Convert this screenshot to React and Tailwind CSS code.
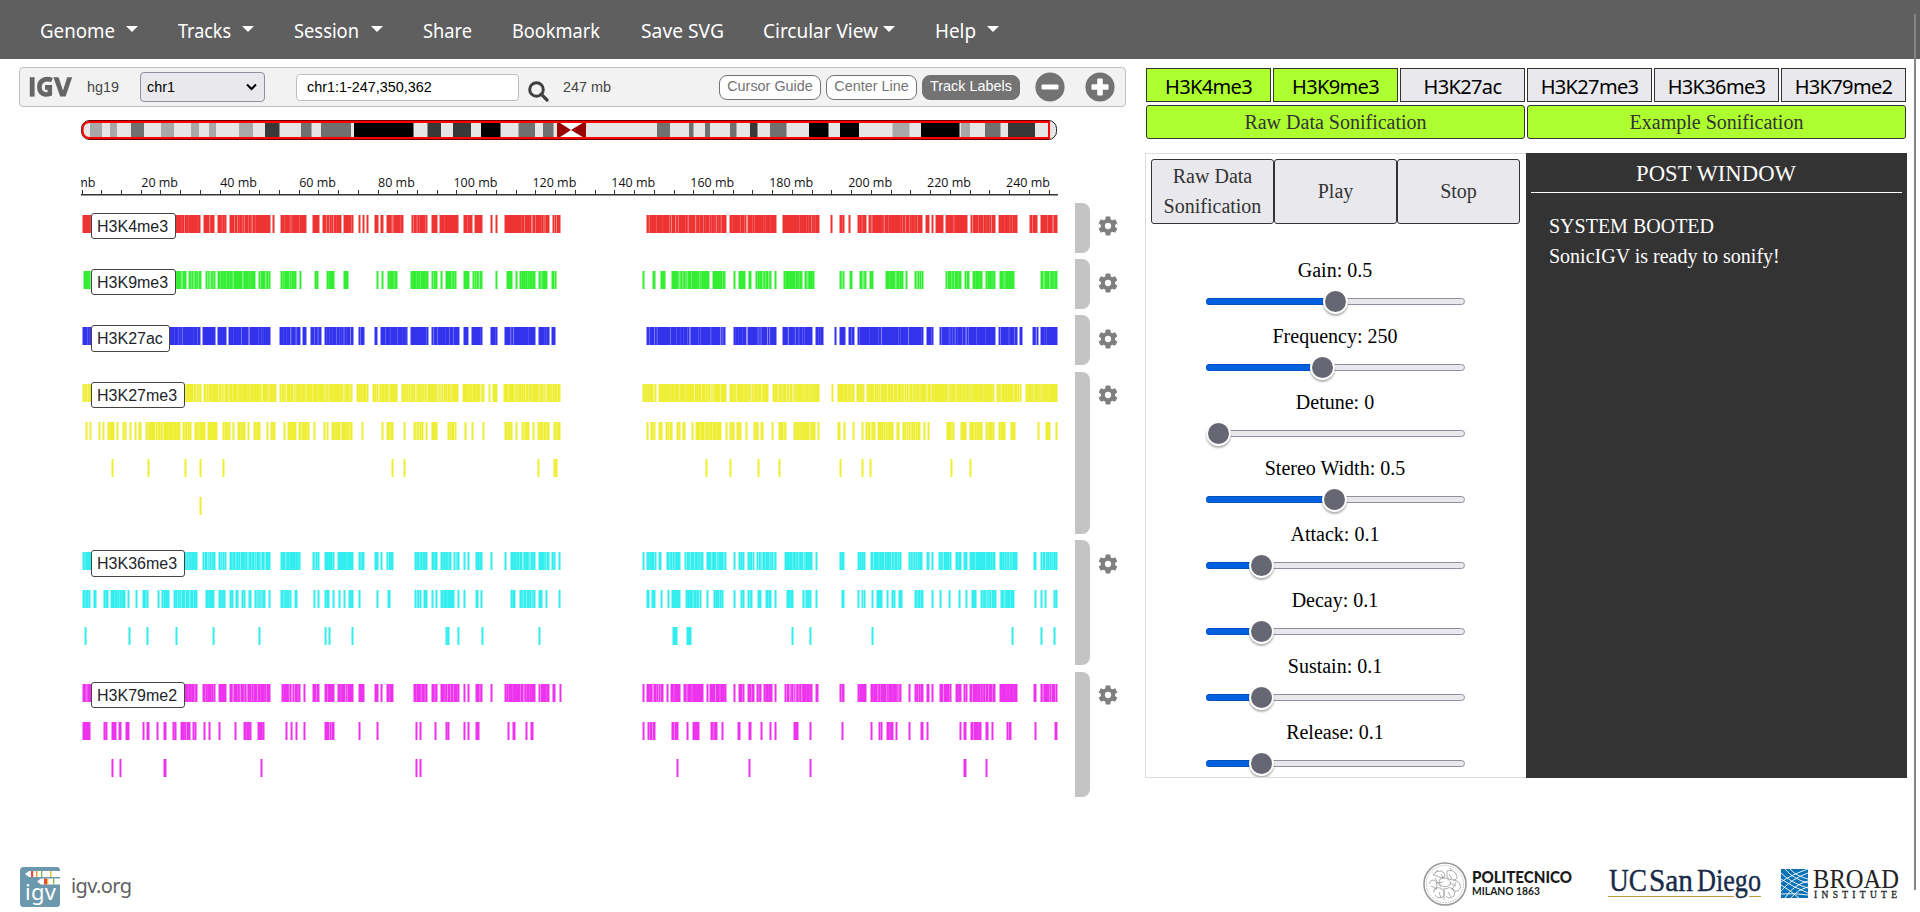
import React from "react";

const NAV = [
  { label: "Genome", w: 138, tw: 75, gap: 11, caret: true },
  { label: "Tracks", w: 116, tw: 53, gap: 11, caret: true },
  { label: "Session", w: 129, tw: 65, gap: 12, caret: true },
  { label: "Share", w: 89, tw: 49 },
  { label: "Bookmark", w: 129, tw: 88 },
  { label: "Save SVG", w: 122, tw: 83 },
  { label: "Circular View", w: 172, tw: 115, gap: 5, caret: true },
  { label: "Help", w: 80, tw: 41, gap: 11, caret: true },
];

// Feature runs are stored in thirds of a pixel: "start-end" measured from the
// left arm origin (-10px) and the right arm origin (540px) of the track canvas.
const TRACKS = [
  {
    name: "H3K4me3", color: "#ee3333", height: 50, space: 6, top: 12, density: 0.22, labelTop: 10, labelH: 26, labelW: 85, gear: 23,
    rows: [[
      "36-393 399-436 441-470 477-602 607-615 630-711 726-749 756-815 819-852 864-873 876-883 889-898 912-926 930-941 948-1003 1022-1075 1083-1104 1107-1168 1179-1210 1212-1240 1260-1268 1275-1284 1302-1440 1445-1474",
      "79-320 327-382 382-471 486-600 631-640 657-675 684-693 711-741 745-909 914-930 933-943 945-971 975-1045 1050-1128 1134-1193 1228-1255 1260-1314",
    ]],
  },
  {
    name: "H3K9me3", color: "#33ee33", height: 50, space: 6, top: 12, density: 0.4, labelTop: 10, labelH: 26, labelW: 85, gear: 24,
    rows: [[
      "39-350 354-396 405-438 441-558 564-604 630-681 687-695 731-747 769-795 819-837 918-926 933-941 950-983 1020-1077 1083-1104 1110-1120 1125-1160 1179-1200 1207-1240 1274-1284 1308-1330 1335-1343 1346-1398 1403-1435 1442-1460",
      "66-75 96-108 120-137 154-270 277-318 339-348 354-378 384-397 404-457 461-471 489-549 552-585 657-675 688-698 718-741 748-763 795-851 855-865 882-911 975-1026 1032-1050 1056-1090 1094-1128 1137-1185 1260-1314",
    ]],
  },
  {
    name: "H3K27ac", color: "#3333ee", height: 50, space: 7, top: 12, density: 0.22, labelTop: 10, labelH: 27, labelW: 79, gear: 24,
    rows: [[
      "36-393 397-437 441-471 474-603 627-692 697-711 721-757 763-852 864-884 912-925 930-1013 1020-1078 1083-1169 1179-1198 1202-1240 1260-1284 1302-1399 1403-1440 1443-1458",
      "79-318 339-380 381-471 486-580 584-612 641-650 657-678 684-704 711-911 917-942 957-1128 1134-1193 1198-1208 1236-1256 1260-1314",
    ]],
  },
  {
    name: "H3K27me3", color: "#eeee33", height: 162, space: 6, top: 12, density: 0.45, labelTop: 10, labelH: 26, labelW: 94, gear: 23,
    rows: [
      [
        "36-397 400-622 627-850 857-897 906-985 993-1168 1176-1245 1254-1262 1265-1283 1299-1473",
        "66-112 113-320 327-446 455-599 633-642 651-704 707-734 738-1125 1128-1205 1215-1314",
      ],
      [
        "45-53 57-66 84-91 95-103 110-134 137-145 155-171 177-186 191-200 203-216 224-332 335-367 372-408 410-445 456-483 486-495 502-527 530-541 549-574 588-596 599-617 638-648 651-681 685-719 729-737 759-766 769-778 782-850 874-883 933-941 948-971 999-1007 1028-1062 1065-1074 1082-1104 1131-1160 1182-1190 1202-1211 1236-1245 1302-1330 1335-1344 1352-1380 1385-1395 1400-1440 1449-1473",
        "78-85 89-108 114-130 136-158 169-184 186-198 213-222 224-307 315-323 328-344 349-365 375-384 399-417 421-432 454-463 473-501 519-588 592-600 651-663 668-678 696-704 723-732 736-768 772-822 827-841 845-903 908-917 921-929 979-1005 1019-1042 1048-1088 1095-1125 1133-1158 1170-1188 1251-1259 1275-1293 1306-1314",
      ],
      [
        "123-130 231-238 342-349 387-395 456-464 963-971 999-1007 1401-1409 1449-1463",
        "255-263 327-335 410-418 474-482 656-664 723-731 748-757 989-997 1048-1056",
      ],
      ["387-395", ""],
    ],
  },
  {
    name: "H3K36me3", color: "#33eeee", height: 125, space: 7, top: 12, density: 0.45, labelTop: 10, labelH: 27, labelW: 94, gear: 24,
    rows: [
      [
        "36-384 396-438 445-470 477-602 630-693 726-749 763-795 800-852 864-884 912-927 930-938 947-972 1033-1075 1083-1105 1109-1147 1150-1169 1179-1187 1191-1200 1214-1240 1260-1269 1302-1310 1319-1399 1403-1440 1443-1459 1464-1473",
        "66-75 78-110 114-127 137-183 193-251 258-320 339-348 354-376 380-405 407-471 491-580 585-594 657-675 711-739 750-846 864-910 917-930 933-942 954-996 1005-1025 1029-1044 1048-1128 1137-1193 1239-1251 1259-1314",
      ],
      [
        "36-64 69-80 99-117 120-168 170-181 194-202 216-236 261-268 274-300 309-385 404-436 445-467 477-491 495-508 512-528 534-546 551-588 593-600 630-666 671-684 728-736 741-749 763-781 786-795 803-813 819-827 834-852 864-873 918-927 951-962 1033-1057 1060-1075 1083-1092 1096-1105 1109-1155 1160-1169 1179-1187 1214-1226 1229-1240 1321-1338 1346-1399 1403-1420 1425-1433 1464-1473",
        "77-91 93-108 120-129 142-150 154-183 196-246 258-266 278-312 339-348 359-374 380-399 411-426 435-457 462-471 497-522 545-576 585-594 662-674 711-719 723-739 752-763 768-788 798-808 813-829 833-848 881-911 933-942 957-965 984-993 1014-1023 1034-1044 1053-1072 1081-1130 1140-1185 1242-1251 1259-1270 1273-1282 1299-1313",
      ],
      [
        "42-52 174-183 228-237 315-323 427-435 564-573 763-772 775-783 844-852 1126-1140 1160-1169 1233-1241 1404-1412",
        "157-174 199-216 514-522 567-576 754-763 1173-1182 1260-1269 1300-1308",
      ],
    ],
  },
  {
    name: "H3K79me2", color: "#ee33ee", height: 125, space: 0, top: 12, density: 0.35, labelTop: 10, labelH: 26, labelW: 94, gear: 23,
    rows: [
      [
        "36-384 396-437 445-470 477-602 633-693 698-706 726-750 763-795 800-852 864-884 912-926 930-938 947-972 1029-1075 1083-1105 1109-1169 1179-1187 1191-1200 1214-1240 1260-1269 1302-1399 1403-1440 1445-1458 1466-1475",
        "66-75 79-132 137-146 151-183 188-251 258-266 268-320 339-348 353-376 381-405 408-426 429-459 462-471 491-580 584-597 657-675 711-741 750-847 864-873 881-911 917-930 933-942 957-996 1005-1026 1029-1044 1048-1128 1136-1193 1239-1252 1260-1314",
      ],
      [
        "36-62 99-114 122-140 143-156 165-180 216-223 228-240 258-266 279-291 306-321 331-362 366-382 398-406 414-423 445-454 492-501 519-547 561-585 644-654 659-667 675-684 698-706 763-795 865-874 918-927 1034-1043 1047-1056 1092-1102 1126-1141 1179-1188 1192-1200 1215-1230 1311-1320 1325-1338 1364-1373 1380-1391",
        "66-75 81-108 154-177 198-206 215-240 269-294 303-312 351-362 384-397 419-428 446-456 462-471 519-536 567-576 662-672 750-759 773-788 798-821 825-834 864-873 899-911 918-927 1017-1026 1030-1041 1049-1085 1094-1106 1114-1123 1158-1177 1242-1252 1301-1313",
      ],
      [
        "122-131 147-156 280-290 571-580 1034-1043 1047-1056",
        "168-178 384-393 567-576 1030-1040 1095-1104",
      ],
    ],
  },
];

const ROW_TOPS = [0, 38, 75, 113];

function runs(text, origin) {
  if (!text) return [];
  return text.split(" ").map((s) => {
    const [a, b] = s.split("-").map(Number);
    return [origin + a / 3, origin + b / 3];
  });
}

function shade(x, seed) {
  const v = Math.sin(x * 12.9898 + seed * 78.233) * 43758.5453;
  return v - Math.floor(v);
}

function Features({ track, seed }) {
  const marks = [];
  track.rows.forEach((row, r) => {
    const y = track.top + ROW_TOPS[r];
    [...runs(row[0], -10), ...runs(row[1], 540)].forEach(([a, b], i) => {
      const x0 = Math.round(a);
      const x1 = Math.max(Math.round(b), x0 + 3);
      const key = r + "-" + i;
      marks.push(<rect key={key} x={x0 + 1} y={y} width={x1 - x0 - 2} height="18" fill={track.color} />);
      marks.push(<rect key={key + "l"} x={x0} y={y} width="1" height="18" fill={track.color} opacity="0.5" />);
      marks.push(<rect key={key + "r"} x={x1 - 1} y={y} width="1" height="18" fill={track.color} opacity="0.5" />);
      for (let x = x0 + 2; x < x1 - 2; x++) {
        const v = shade(x + r * 991, seed);
        if (v < track.density) {
          marks.push(<rect key={key + "s" + x} x={x} y={y} width="1" height="18" fill="#fff" opacity={0.08 + (v / track.density) ** 2 * 0.36} />);
        }
      }
    });
  });
  return (
    <svg width="978" height={track.height} className="block shrink-0" shapeRendering="crispEdges">{marks}</svg>
  );
}

function Gear() {
  return (
    <svg width="20" height="20" viewBox="1.5 1.5 21 21" fill="#7f7f7f">
      <path d="M19.43 12.98c.04-.32.07-.64.07-.98s-.03-.66-.07-.98l2.11-1.65c.19-.15.24-.42.12-.64l-2-3.46c-.12-.22-.39-.3-.61-.22l-2.49 1c-.52-.4-1.08-.73-1.69-.98l-.38-2.65C14.46 2.18 14.25 2 14 2h-4c-.25 0-.46.18-.49.42l-.38 2.65c-.61.25-1.17.59-1.69.98l-2.49-1c-.23-.09-.49 0-.61.22l-2 3.46c-.13.22-.07.49.12.64l2.11 1.65c-.04.32-.07.65-.07.98s.03.66.07.98l-2.11 1.65c-.19.15-.24.42-.12.64l2 3.46c.12.22.39.3.61.22l2.49-1c.52.4 1.08.73 1.69.98l.38 2.65c.03.24.24.42.49.42h4c.25 0 .46-.18.49-.42l.38-2.65c.61-.25 1.17-.59 1.69-.98l2.49 1c.23.09.49 0 .61-.22l2-3.46c.12-.22.07-.49-.12-.64l-2.11-1.65zM12 15.3a3.3 3.3 0 1 1 0-6.6 3.3 3.3 0 0 1 0 6.6z" />
    </svg>
  );
}

function Track({ track, seed }) {
  return (
    <div className="relative flex pl-20" style={{ marginBottom: track.space }}>
      <Features track={track} seed={seed} />
      <div
        className="absolute left-[91px] flex items-center rounded-[3px] border border-[#444] bg-white pl-[5px] pt-px text-[16px] leading-none text-[#212529]"
        style={{ top: track.labelTop, height: track.labelH, width: track.labelW }}
      >
        {track.name}
      </div>
      <div className="ml-[17px] w-[15px] rounded-r-[8px] bg-[#c4c4c4]" />
      <div className="ml-[8px]" style={{ paddingTop: track.gear - 10 }}>
        <Gear />
      </div>
    </div>
  );
}

const BANDS = [
  [90, 12, "#a9a9a9"], [110, 7, "#a9a9a9"], [131, 13, "#707070"], [161, 13, "#a9a9a9"], [191, 8, "#a9a9a9"],
  [209, 7, "#a9a9a9"], [239, 14, "#a9a9a9"], [265, 14.5, "#383838"], [301, 10.5, "#707070"], [321, 30, "#707070"],
  [354, 59.5, "#000"], [427.5, 13.5, "#383838"], [453, 18, "#383838"], [481, 19.5, "#000"], [518.5, 16.5, "#707070"], [543, 10.5, "#707070"],
  [657, 13, "#707070"], [689, 4.5, "#707070"], [705, 5, "#707070"], [730, 6.5, "#707070"], [750, 7.5, "#383838"], [770, 16.5, "#707070"],
  [809, 19.5, "#000"], [840, 19, "#000"], [892.5, 17, "#a9a9a9"], [921, 38.5, "#000"], [961, 9, "#a9a9a9"], [985, 15.5, "#707070"], [1008, 27, "#383838"],
];

function Ideogram() {
  return (
    <svg width="982" height="22" viewBox="79 119 982 22" className="block">
      <defs>
        <clipPath id="chromosome"><rect x="81.5" y="120.5" width="975" height="19" rx="8" /></clipPath>
      </defs>
      <g clipPath="url(#chromosome)">
        <rect x="81" y="120" width="977" height="20" fill="#e6e6e6" />
        {BANDS.map(([x, w, c]) => <rect key={x} x={x} y="120" width={w} height="20" fill={c} />)}
        <rect x="557" y="120" width="29" height="20" fill="#fff" />
        <path d="M557 121L571 130L557 139zM586 121L571 130L586 139z" fill="#990000" />
      </g>
      <rect x="81.5" y="120.5" width="975" height="19" rx="8" fill="none" stroke="#222" strokeWidth="1" />
      <path d="M1049 122H89.5Q82.5 122 82.5 130Q82.5 138 89.5 138H1049z" fill="none" stroke="#ff0000" strokeWidth="2" />
      <path d="M89 120.5H1049M89 139.5H1049" stroke="#6a0000" />
    </svg>
  );
}

function Ruler() {
  const pxPerMb = 3.947;
  const ticks = Array.from({ length: 50 }, (_, i) => i * 5);
  return (
    <svg width="978" height="26" viewBox="80 172 978 26" className="block">
      <svg x="81" y="172" width="978" height="26" viewBox="81 172 978 26">
        {ticks.map((mb) => (
          <rect key={mb} x={Math.round(81.5 + mb * pxPerMb)} y="190" width="1" height="5" fill="#333" />
        ))}
        <rect x="81" y="194" width="977" height="1.5" fill="#333" />
        {ticks.filter((mb) => mb % 20 === 0).map((mb) => (
          <text key={mb} x={81.5 + mb * pxPerMb - 0.8} y="187" textAnchor="middle" fontSize="12.5" fontFamily="'Open Sans', sans-serif" fill="#111">{mb + " mb"}</text>
        ))}
      </svg>
    </svg>
  );
}

function Toolbar() {
  const pill = "flex items-center justify-center rounded-[8px] border border-[#737373] pb-px text-[14.4px] leading-none h-[25px]";
  return (
    <div className="ml-[19px] flex h-10 w-[1107px] items-center rounded-[4px] border border-[#bfbfbf] bg-[#f2f2f2] text-[14.4px] leading-none text-[#444]">
      <svg width="44" height="22" viewBox="0 0 44 22" className="ml-[9px]" fill="none" stroke="#666">
        <path d="M3.2 1.2V20.6" strokeWidth="4.8" />
        <path d="M23 4.2C16.5 1.6 10.4 4.3 10.4 11C10.4 17.4 15.5 19.6 20.8 17.8V11.4H16" strokeWidth="4.6" />
        <path d="M24.4 1.2H29.6L34 14.6L38.2 1.2H43.2L36.6 20.6H31.2z" fill="#666" stroke="none" />
      </svg>
      <span className="ml-[14px] w-[53px]">hg19</span>
      <div className="flex h-[30px] w-[125px] items-center justify-between rounded-[4px] border border-[#8f8f9d] bg-[#e9e9ed] pl-[6px] pr-[7px] text-black">
        <span>chr1</span>
        <svg width="11" height="8" viewBox="0 0 11 8" fill="none" stroke="#000" strokeWidth="2"><path d="M1 1.5L5.5 6L10 1.5" /></svg>
      </div>
      <div className="ml-[31px] flex h-[27px] w-[223px] items-center rounded-[4px] border border-[#bfbfbf] bg-white pl-[10px] text-black">
        chr1:1-247,350,362
      </div>
      <svg width="21" height="21" viewBox="0 0 21 21" className="ml-[9px] mt-[9px]" fill="none" stroke="#404040">
        <circle cx="8.5" cy="8.5" r="6.8" strokeWidth="3" />
        <path d="M13.2 13.2L19 19" strokeWidth="3.2" strokeLinecap="round" />
      </svg>
      <span className="ml-[14px] w-[156px]">247 mb</span>
      <div className={pill + " w-[102px] bg-white text-[#737373]"}>Cursor Guide</div>
      <div className={pill + " ml-[5px] w-[91px] bg-white text-[#737373]"}>Center Line</div>
      <div className={pill + " ml-[5px] w-[98px] bg-[#737373] text-white"}>Track Labels</div>
      <svg width="30" height="30" viewBox="0 0 30 30" className="ml-[15px]">
        <circle cx="15" cy="15" r="14.6" fill="#737373" />
        <rect x="6.5" y="12.4" width="17" height="5.2" rx="1" fill="#fff" />
      </svg>
      <svg width="30" height="30" viewBox="0 0 30 30" className="ml-[20px]">
        <circle cx="15" cy="15" r="14.6" fill="#737373" />
        <rect x="6.5" y="12.2" width="17" height="5.6" rx="1" fill="#fff" />
        <rect x="12.2" y="6.5" width="5.6" height="17" rx="1" fill="#fff" />
      </svg>
    </div>
  );
}

const MARKS = [["H3K4me3", true], ["H3K9me3", true], ["H3K27ac"], ["H3K27me3"], ["H3K36me3"], ["H3K79me2"]];
const SLIDERS = [
  ["Gain: 0.5", 129], ["Frequency: 250", 116], ["Detune: 0", 12], ["Stereo Width: 0.5", 128],
  ["Attack: 0.1", 55], ["Decay: 0.1", 55], ["Sustain: 0.1", 55], ["Release: 0.1", 55],
];

function Slider({ label, pos }) {
  return (
    <div className="flex h-[66px] flex-col items-center">
      <div className="h-[30px] pt-px text-[20px] leading-[30px] text-black">{label}</div>
      <div className="relative mt-[14px] h-[7px] w-[259px] rounded-full border border-[#8f8f9d] bg-[#e9e9ed]">
        <div className="absolute -left-px -top-px h-[7px] rounded-l-full border-y border-[#0250bb] bg-[#0060df]" style={{ width: pos }} />
        <div className="absolute -top-[10px] h-[25px] w-[25px] rounded-full border-2 border-white bg-[#676774] shadow-[0_2px_2px_rgba(0,0,0,0.3)]" style={{ left: pos - 13 }} />
      </div>
    </div>
  );
}

function SonificationPanel() {
  const action = "flex flex-1 items-center justify-center rounded-[3px] border border-[#333] bg-[#e9e9ed] pb-px text-center text-[20px] leading-[30px] text-[#333]";
  return (
    <div className="flex w-[762px] flex-col font-['Liberation_Serif',serif]">
      <div className="mx-px grid grid-cols-6 gap-[2px]">
        {MARKS.map(([m, on]) => (
          <div key={m} className={"flex h-[34px] items-center justify-center border border-[#333] pt-[4px] font-['Noto_Sans',sans-serif] text-[20px] leading-none tracking-[-0.65px] text-black " + (on ? "bg-[#adff2f]" : "bg-[#e9e9ed]")}>
            {m}
          </div>
        ))}
      </div>
      <div className="mx-px mt-[3px] grid grid-cols-2 gap-[2px]">
        {["Raw Data Sonification", "Example Sonification"].map((t) => (
          <div key={t} className="flex h-[34px] items-center justify-center rounded-[3px] border border-[#333] bg-[#adff2f] text-[20px] leading-none text-[#333]">{t}</div>
        ))}
      </div>
      <div className="mt-[14px] flex h-[625px]">
        <div className="w-[381px] overflow-hidden border border-r-0 border-[#ddd] px-[5px] pt-[5px]">
          <div className="flex h-[65px] w-[369px]">
            <div className={action}>Raw Data<br />Sonification</div>
            <div className={action}>Play</div>
            <div className={action}>Stop</div>
          </div>
          <div className="mt-[30px] w-[368px]">
            {SLIDERS.map(([l, p]) => <Slider key={l} label={l} pos={p} />)}
          </div>
        </div>
        <div className="w-[381px] bg-[#333] px-[5px] text-white">
          <div className="flex h-[40px] items-center justify-center border-b border-white pr-px pt-[3px] text-[22.7px]">POST WINDOW</div>
          <div className="mt-[18px] pl-[18px] text-[20px] leading-[30px]">
            <div>SYSTEM BOOTED</div>
            <div>SonicIGV is ready to sonify!</div>
          </div>
        </div>
      </div>
    </div>
  );
}

function IgvLogo() {
  return (
    <svg width="40" height="40" viewBox="0 0 40 40">
      <rect width="40" height="40" rx="3.5" fill="#6c98ae" />
      <path d="M5 7L9 4H40V10H9z" fill="#fff" />
      <path d="M17 14.5L21 11.5H40V17.5H21z" fill="#fff" />
      <rect x="11" y="4" width="2.2" height="6" fill="#e74c3c" />
      <rect x="16" y="4" width="1.5" height="6" fill="#f2a13a" />
      <rect x="21" y="4" width="1.3" height="6" fill="#7ab648" />
      <rect x="30" y="4" width="1.5" height="6" fill="#f2b33a" />
      <rect x="24" y="11.5" width="3" height="6" fill="#e74c3c" />
      <rect x="27" y="11.5" width="1.3" height="6" fill="#f2c33a" />
      <rect x="33" y="11.5" width="1.3" height="6" fill="#7ab648" />
      <text x="20.5" y="33" textAnchor="middle" textLength="31" fontSize="22" fontFamily="'Noto Sans', sans-serif" fill="#fff">igv</text>
    </svg>
  );
}

function Politecnico() {
  return (
    <div className="flex items-center">
      <svg width="44" height="44" viewBox="0 0 44 44" fill="none" stroke="#999">
        <circle cx="22" cy="22" r="21" strokeWidth="1.6" />
        <circle cx="22" cy="22" r="18.6" strokeWidth="0.6" strokeDasharray="1.5 1" />
        <g strokeWidth="0.8">
          <path d="M10 13q4-5 8-4t4 5q-3 3-6 1t-6-2zM24 9q6-2 9 3t-2 6q-5 0-7-3zM17 17q4-3 8 0t2 6q-4 3-8 1t-2-7z" />
          <path d="M6 22q2-5 5-4t3 6q-1 5-4 6M30 18q5 0 7 4t-2 7q-5 1-6-3M10 28q5-4 9-1t1 8q-6 2-8-2M22 27q5-3 8 0t1 7q-5 4-8 0M14 20l4 5M12 16l3 5 5-1M26 12l3 5M33 20l-4 8M18 12l3 5M25 30l3 5M16 30l2 6M8 24l6 3M21 26v12M27 21l6 3M12 11l3-3M29 8l-3-2" />
        </g>
      </svg>
      <svg width="102" height="34" viewBox="0 -1 102 34" className="ml-[5px] block font-['Lato',sans-serif]">
        <text x="0" y="14.5" textLength="100" lengthAdjust="spacingAndGlyphs" fontSize="16" fontWeight="900" fill="#1a1a1a">POLITECNICO</text>
        <text x="0" y="27" textLength="68" lengthAdjust="spacingAndGlyphs" fontSize="10.5" fontWeight="700" fill="#1a1a1a">MILANO 1863</text>
      </svg>
    </div>
  );
}

function UcSanDiego() {
  const word = { fontSize: 32.5, fontFamily: "'Liberation Serif', serif", fill: "#182b49", stroke: "#182b49", strokeWidth: 0.4, lengthAdjust: "spacingAndGlyphs" };
  return (
    <svg width="155" height="36" viewBox="0 -1 155 36" className="ml-[34px]">
      <text x="1" y="24" textLength="38" {...word}>UC</text>
      <text x="41" y="24" textLength="44" {...word}>San</text>
      <text x="89" y="24" textLength="64" {...word}>Diego</text>
      <path d="M0 29.5H126M141 29.5H153" stroke="#c69a3c" strokeWidth="1.2" />
    </svg>
  );
}

function Broad() {
  return (
    <svg width="122" height="34" viewBox="0 0 122 34" className="ml-[16px]">
      <rect x="2" y="2" width="27" height="29" fill="#0a72b5" />
      <g fill="none" stroke="#fff" strokeWidth="0.9">
        <path d="M11 2Q17 9 29 12M6 2Q14 12 29 16M2 6Q12 16 29 21M2 12Q14 20 29 26M2 18Q12 24 20 31M29 6Q12 12 2 24M29 14Q14 18 6 31M29 20Q18 23 12 31M29 2Q12 8 2 15M29 28Q16 26 2 27" />
      </g>
      <text x="34" y="20.5" textLength="86" lengthAdjust="spacingAndGlyphs" fontSize="28" fontFamily="'Liberation Serif', serif" fill="#222">BROAD</text>
      <text x="35" y="31" textLength="83" fontSize="9.5" fontFamily="'Liberation Serif', serif" fill="#222" stroke="#222" strokeWidth="0.3">INSTITUTE</text>
    </svg>
  );
}

export default function App() {
  return (
    <div className="relative flex h-[912px] w-[1920px] flex-col overflow-hidden bg-white font-['Liberation_Sans',sans-serif]">
      <nav className="flex h-[59px] items-center bg-[#5f5f5f] pl-10 pt-[3px] font-['Noto_Sans',sans-serif] text-white">
        {NAV.map((n) => (
          <div key={n.label} className="flex shrink-0 items-center" style={{ width: n.w }}>
            <svg width={n.tw + 2} height="36" className="block shrink-0 overflow-visible">
              <text x="0" y="25" fontSize="20" textLength={n.tw} lengthAdjust="spacingAndGlyphs" fill="#fff">{n.label}</text>
            </svg>
            {n.caret && (
              <svg width="12" height="6" viewBox="0 0 12 6" className="-mt-[5px]" style={{ marginLeft: n.gap - 2 }}>
                <path d="M0 0H12L6 6z" fill="#fff" />
              </svg>
            )}
          </div>
        ))}
      </nav>
      <main className="flex h-[793px] pt-2">
        <section className="w-[1145px] shrink-0">
          <Toolbar />
          <div className="ml-[79px] mt-[12px]"><Ideogram /></div>
          <div className="ml-[80px] mt-[31px]"><Ruler /></div>
          <div className="mt-[5px]">
            {TRACKS.map((t, i) => <Track key={t.name} track={t} seed={i + 1} />)}
          </div>
        </section>
        <section className="pt-px"><SonificationPanel /></section>
      </main>
      <footer className="flex h-[60px] items-center pl-5 pr-[19px]">
        <div className="mt-[10px] flex items-center">
          <IgvLogo />
          <span className="ml-[11px] -mt-[3px] font-['Noto_Sans',sans-serif] text-[20px] leading-[30px] tracking-[-0.6px] text-[#5f5f5f]">igv.org</span>
        </div>
        <div className="ml-auto mt-[3px] flex items-center">
          <Politecnico />
          <UcSanDiego />
          <Broad />
        </div>
      </footer>
      <div className="absolute left-[1914px] top-[14px] h-[876px] w-[2px] bg-[#858585]" />
    </div>
  );
}
